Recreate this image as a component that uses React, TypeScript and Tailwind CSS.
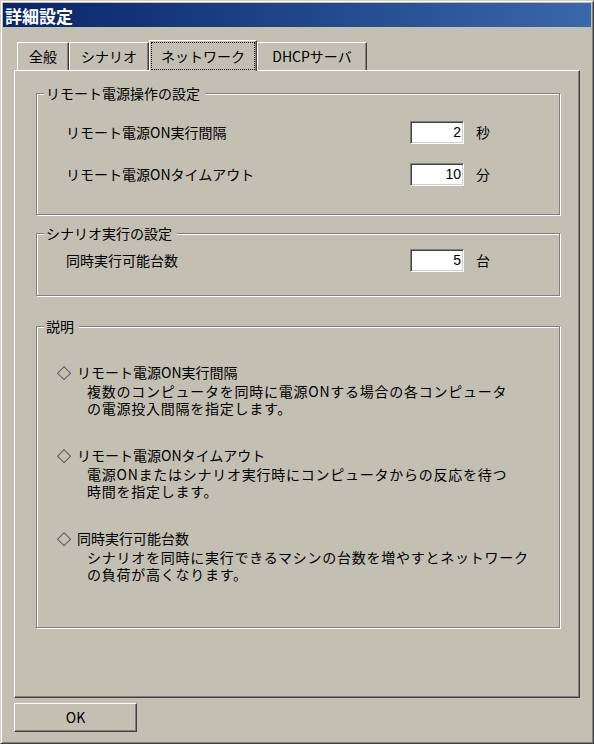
import React from "react";

type Tab = { label: string; width: string; active?: boolean };

const tabs: Tab[] = [
  { label: "全般", width: "w-[52px]" },
  { label: "シナリオ", width: "w-[80px]" },
  { label: "ネットワーク", width: "w-[108px]", active: true },
  { label: "DHCPサーバ", width: "w-[110px]" },
];

const notes = [
  {
    title: "リモート電源ON実行間隔",
    lines: [
      "複数のコンピュータを同時に電源ONする場合の各コンピュータ",
      "の電源投入間隔を指定します。",
    ],
  },
  {
    title: "リモート電源ONタイムアウト",
    lines: [
      "電源ONまたはシナリオ実行時にコンピュータからの反応を待つ",
      "時間を指定します。",
    ],
  },
  {
    title: "同時実行可能台数",
    lines: [
      "シナリオを同時に実行できるマシンの台数を増やすとネットワーク",
      "の負荷が高くなります。",
    ],
  },
];

const GroupBox: React.FC<{
  title: string;
  className?: string;
  children?: React.ReactNode;
}> = ({ title, className = "", children }) => (
  <fieldset
    className={`ml-[21px] w-[524px] border border-[#808080] shadow-[inset_1px_1px_0_#ffffff,1px_1px_0_#ffffff] ${className}`}
  >
    <legend className="ml-[7px] bg-[#c3bfb3] pl-[2px] pr-[5px] leading-[16px]">
      {title}
    </legend>
    {children}
  </fieldset>
);

const NumberRow: React.FC<{ label: string; value: string; unit: string; className?: string }> = ({
  label,
  value,
  unit,
  className = "",
}) => (
  <div className={`flex items-center pl-[29px] ${className}`}>
    <span className="w-[344px]">{label}</span>
    <div className="flex h-[23px] w-[54px] items-center justify-end border border-t-[#808080] border-l-[#808080] border-r-white border-b-white bg-white pr-[2px] font-['Liberation_Sans',sans-serif] shadow-[inset_1px_1px_0_#404040,inset_-1px_-1px_0_#d4d0c8]">
      {value}
    </div>
    <span className="ml-[12px]">{unit}</span>
  </div>
);

export default function App() {
  return (
    <div className="h-[744px] w-[594px] border border-t-[#d4d0c8] border-l-[#d4d0c8] border-r-[#404040] border-b-[#404040] bg-[#c3bfb3] p-[1px] font-['Noto_Sans_CJK_JP',sans-serif] text-[14px] text-black shadow-[inset_1px_1px_0_#ffffff,inset_-1px_-1px_0_#808080]">
      <div className="p-[1px]">
        {/* title bar */}
        <div className="flex h-[24px] items-center bg-gradient-to-r from-[#0a246a] to-[#3a68aa] pl-[2px] text-[17px] font-bold leading-none text-white">
          詳細設定
        </div>

        {/* tabs */}
        <div className="mt-[13px] ml-[11px] flex h-[30px] items-end pl-[3px]">
          {tabs.map((t) =>
            t.active ? (
              <div
                key={t.label}
                className={`relative z-10 -mb-px flex h-[31px] ${t.width} items-start justify-center border-t border-l border-r border-t-white border-l-white border-r-[#404040] bg-[#c3bfb3] px-[1px] pt-[1px] shadow-[inset_-1px_0_0_#808080]`}
              >
                <span className="flex h-[28px] w-full items-center justify-center outline-1 outline-dotted outline-offset-[-1px] outline-black">
                  {t.label}
                </span>
              </div>
            ) : (
              <div
                key={t.label}
                className={`flex h-[28px] ${t.width} items-center justify-center border-t border-l border-r border-t-white border-l-white border-r-[#404040] shadow-[inset_-1px_0_0_#808080]`}
              >
                {t.label}
              </div>
            )
          )}
        </div>

        {/* tab panel */}
        <div className="ml-[11px] h-[628px] w-[566px] border border-t-white border-l-white border-r-[#404040] border-b-[#404040] shadow-[inset_-1px_-1px_0_#808080]">
          <GroupBox title="リモート電源操作の設定" className="mt-[14px] h-[130px]">
            <NumberRow label="リモート電源ON実行間隔" value="2" unit="秒" className="mt-[20px]" />
            <NumberRow label="リモート電源ONタイムアウト" value="10" unit="分" className="mt-[19px]" />
          </GroupBox>

          <GroupBox title="シナリオ実行の設定" className="mt-[10px] h-[71px]">
            <NumberRow label="同時実行可能台数" value="5" unit="台" className="mt-[8px]" />
          </GroupBox>

          <GroupBox title="説明" className="mt-[22px] h-[310px]">
            <div className="mt-[30px] flex flex-col gap-[30px]">
              {notes.map((n) => (
                <div key={n.title}>
                  <div className="flex h-[17px] items-center pl-[20px] leading-[17px]">
                    <span className="inline-block w-[20px]">◇</span>
                    {n.title}
                  </div>
                  <div className="mt-[2px] pl-[50px] leading-[17px] tracking-[0.75px]">
                    {n.lines.map((l) => (
                      <div key={l}>{l}</div>
                    ))}
                  </div>
                </div>
              ))}
            </div>
          </GroupBox>
        </div>

        {/* OK button */}
        <button className="mt-[5px] ml-[11px] flex h-[29px] w-[123px] items-center justify-center border border-t-white border-l-white border-r-[#404040] border-b-[#404040] shadow-[inset_-1px_-1px_0_#808080]">
          OK
        </button>
      </div>
    </div>
  );
}
